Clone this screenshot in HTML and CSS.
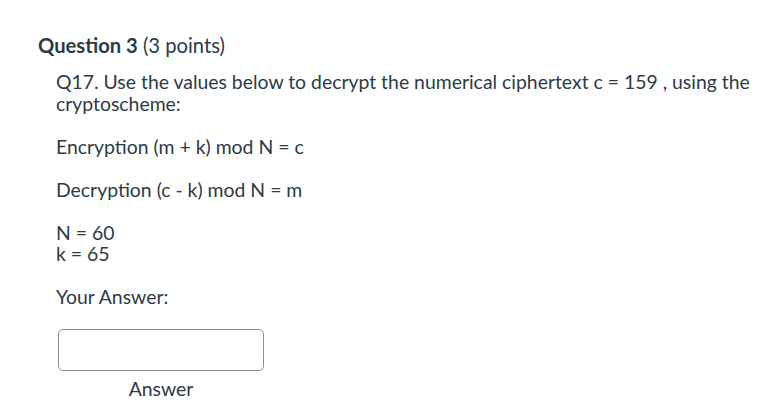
FILE: index.html
```html
<!DOCTYPE html>
<html>
<head>
<meta charset="utf-8">
<link rel="stylesheet" href="styles.css">
</head>
<body>
<div class="quiz">
  <h2 class="q-header"><span class="q-name">Question 3</span> <span class="q-points">(3 points)</span></h2>
  <div class="q-body">
    <p class="line">Q17. Use the values below to decrypt the numerical ciphertext c = 159 , using the cryptoscheme:</p>
    <p class="line">Encryption (m + k) mod N = c</p>
    <p class="line">Decryption (c - k) mod N = m</p>
    <p class="line">N = 60<br>k = 65</p>
    <p class="line">Your Answer:</p>
    <div class="answer">
      <input class="answer-input" type="text" aria-label="Answer">
      <div class="answer-label">Answer</div>
    </div>
  </div>
</div>
</body>
</html>
```
FILE: styles.css
```css
html, body {
  margin: 0;
  padding: 0;
  background: #ffffff;
}
body {
  font-family: Lato, "Open Sans", sans-serif;
  color: #2d3b45;
}
.quiz {
  padding: 33px 0 0 38px;
}
.q-header {
  margin: 0;
  font-size: 20.2px;
  line-height: 24px;
  font-weight: 400;
}
.q-name {
  font-weight: 700;
}
.q-body {
  padding: 14px 0 0 18px;
  font-size: 19.4px;
  line-height: 21.5px;
}
.line {
  margin: 0 0 21.5px 0;
}
.answer {
  display: flex;
  flex-direction: column;
  align-items: center;
  width: 206px;
  margin: 1px 0 0 2px;
}
.answer-input {
  box-sizing: border-box;
  width: 206px;
  height: 42px;
  border: 1px solid #8a8f93;
  border-radius: 5px;
  background: #fff;
  margin: 0;
}
.answer-label {
  margin-top: 7px;
  font-size: 19.4px;
  line-height: 22px;
}
```
